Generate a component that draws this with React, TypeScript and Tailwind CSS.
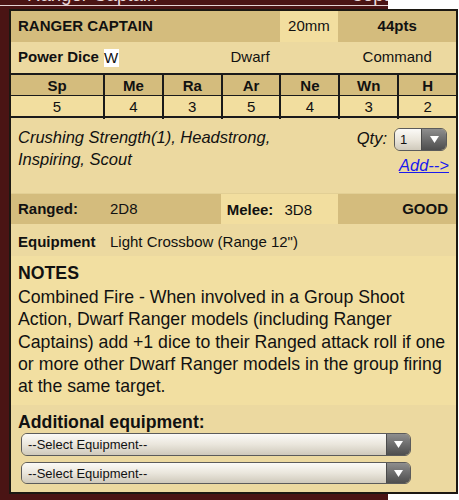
const cols = 'grid grid-cols-[92px_repeat(6,minmax(0,1fr))]';

function Dropdown({ label, className }: { label: string; className?: string }) {
  return (
    <div className={`flex overflow-hidden rounded-[6px] border border-[#5b5b5b] ${className ?? ''}`}>
      <div className="flex flex-1 items-center bg-linear-to-b from-[#fbfaf7] via-[#eae6dc] to-[#cfc9bb] pl-[6px] text-[13px] text-[#111]">
        {label}
      </div>
      <div className="flex w-[24px] items-center justify-center border-l border-[#4a4a4a] bg-linear-to-b from-[#8e8e8e] to-[#4e4e4e]">
        <svg width="9" height="7" viewBox="0 0 9 7">
          <path d="M0 0H9L4.5 7Z" fill="#fff" />
        </svg>
      </div>
    </div>
  );
}

const stats = [
  ['Sp', '5'],
  ['Me', '4'],
  ['Ra', '3'],
  ['Ar', '5'],
  ['Ne', '4'],
  ['Wn', '3'],
  ['H', '2'],
];

export default function App() {
  return (
    <div className="relative h-[500px] w-[459px] overflow-hidden bg-white font-['Liberation_Sans',Arial,sans-serif] text-[#111]">
      {/* page behind the popup */}
      <div className="h-full w-[388px] bg-[#4a1414]">
        <div className="flex h-[6px] items-end justify-between overflow-hidden border-b border-[#e2d2d2] pl-[27px] text-[18.6px] leading-none text-[#eadada]">
          <span>Ranger Captain</span>
          <span className="-mr-[10px]">56pts</span>
        </div>
      </div>

      {/* unit card */}
      <div className="absolute left-[9px] top-[9px] w-[449px] border-2 border-[#1c1812] bg-[#ecd9a0] text-[15px]">
        <div className={`${cols} h-[31px] bg-[#d4bc7d]`}>
          <div className="col-span-4 flex items-center pl-[7px] font-bold">RANGER CAPTAIN</div>
          <div className="flex items-center justify-center bg-[#f2de9f]">20mm</div>
          <div className="col-span-2 flex items-center justify-center font-bold">44pts</div>
        </div>

        <div className={`${cols} h-[31px] bg-[#ecd9a0]`}>
          <div className="col-span-2 flex items-center pl-[7px]">
            <span className="font-bold">Power Dice</span>
            <span className="ml-[5px] bg-white pr-[1px] leading-[18px]">W</span>
          </div>
          <div className="col-span-3 flex items-center justify-center">Dwarf</div>
          <div className="col-span-2 flex items-center justify-center">Command</div>
        </div>

        <div className="border-y-2 border-[#1a1a1a]">
          <div className={`${cols} h-[21px] border-b border-[#1a1a1a] bg-[#d4bc7d] font-bold`}>
            {stats.map(([k], i) => (
              <div key={k} className={`flex items-center justify-center ${i > 0 ? 'border-l-2 border-[#1a1a1a]' : ''}`}>
                {k}
              </div>
            ))}
          </div>
          <div className={`${cols} h-[20px] bg-[#f2de9f]`}>
            {stats.map(([k, v], i) => (
              <div key={k} className={`flex items-center justify-center ${i > 0 ? 'border-l-2 border-[#1a1a1a]' : ''}`}>
                {v}
              </div>
            ))}
          </div>
        </div>

        <div className="flex h-[75px] justify-between pl-[7px] pr-[7px] pt-[8px] text-[16.5px] italic leading-[22px]">
          <div className="w-[290px]">Crushing Strength(1), Headstrong, Inspiring, Scout</div>
          <div className="flex flex-col items-end pt-[2px]">
            <div className="mr-[2px] flex items-center gap-[7px]">
              <span className="-mt-[4px]">Qty:</span>
              <div className="flex h-[23px] w-[53px] overflow-hidden rounded-[6px] border border-[#5b5b5b] not-italic">
                <div className="flex flex-1 items-center bg-linear-to-b from-[#fbfaf7] via-[#eae6dc] to-[#cfc9bb] pl-[5px] text-[13px]">
                  1
                </div>
                <div className="flex w-[25px] items-center justify-center border-l border-[#4a4a4a] bg-linear-to-b from-[#8e8e8e] to-[#4e4e4e]">
                  <svg width="9" height="7" viewBox="0 0 9 7">
                    <path d="M0 0H9L4.5 7Z" fill="#fff" />
                  </svg>
                </div>
              </div>
            </div>
            <a href="#" className="mt-[4px] leading-[20px] text-[#1a1aee] underline">
              Add--&gt;
            </a>
          </div>
        </div>

        <div className={`${cols} h-[31px] border-t border-[#e2cf95] bg-[#d4bc7d]`}>
          <div className="flex items-center pl-[7px] font-bold">Ranged:</div>
          <div className="col-span-2 flex items-center pl-[7px]">2D8</div>
          <div className="flex items-center bg-[#f2de9f] pl-[6px] pt-[3px] font-bold">Melee:</div>
          <div className="flex items-center bg-[#f2de9f] pl-[5px] pt-[3px]">3D8</div>
          <div className="col-span-2 flex items-center justify-end pr-[8px] font-bold">GOOD</div>
        </div>

        <div className={`${cols} h-[32px] pt-[4px]`}>
          <div className="flex items-center pl-[7px] font-bold">Equipment</div>
          <div className="col-span-6 flex items-center pl-[7px]">Light Crossbow (Range 12")</div>
        </div>

        <div className="bg-[#f2dfa1] px-[7px] pb-[8px] pt-[6px] text-[17.7px]">
          <div className="font-bold leading-[22px]">NOTES</div>
          <p className="mt-[2px] leading-[22.3px]">
            Combined Fire - When involved in a Group Shoot Action, Dwarf Ranger models (including Ranger
            Captains) add +1 dice to their Ranged attack roll if one or more other Dwarf Ranger models in the
            group firing at the same target.
          </p>
        </div>

        <div className="pb-[8px] pt-[6px]">
          <div className="pl-[7px] text-[17.7px] font-bold leading-[22px]">Additional equipment:</div>
          <Dropdown label="--Select Equipment--" className="ml-[10px] h-[23px] w-[390px]" />
          <Dropdown label="--Select Equipment--" className="ml-[10px] mt-[6px] h-[22px] w-[390px]" />
        </div>
      </div>
    </div>
  );
}
